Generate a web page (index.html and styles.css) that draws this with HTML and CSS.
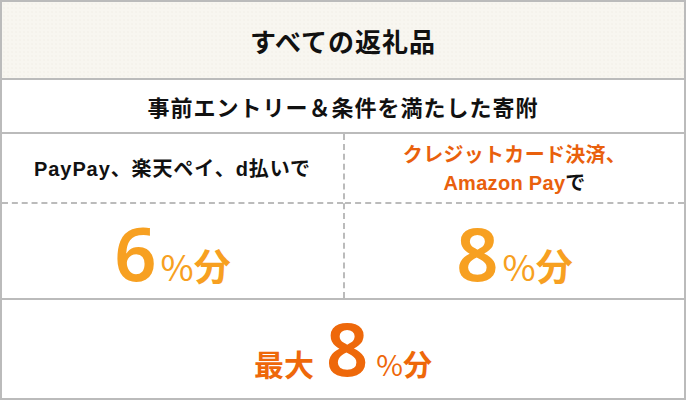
FILE: index.html
```html
<!DOCTYPE html>
<html lang="ja">
<head>
<meta charset="utf-8">
<link rel="stylesheet" href="styles.css">
</head>
<body>
<div class="box">
  <div class="head">すべての返礼品</div>
  <div class="sub">事前エントリー＆条件を満たした寄附</div>
  <div class="cols">
    <div class="col">
      <div class="cap"><p class="cap-t cap-wide">PayPay、楽天ペイ、d払いで</p></div>
      <div class="rate"><span class="num">6</span><span class="pct">%</span><span class="bun">分</span></div>
    </div>
    <div class="col col-r">
      <div class="cap"><p class="cap-t cap-or">クレジットカード決済、<br>Amazon Pay<span class="blk">で</span></p></div>
      <div class="rate"><span class="num">8</span><span class="pct">%</span><span class="bun">分</span></div>
    </div>
  </div>
  <div class="max"><span class="mx">最大</span><span class="num">8</span><span class="pct">%</span><span class="bun">分</span></div>
</div>
</body>
</html>
```
FILE: styles.css
```css
* { box-sizing: border-box; }
html, body { margin: 0; padding: 0; background: #fff; }
body { font-family: "Noto Sans CJK JP", "Noto Sans", sans-serif; color: #111; }
.box {
  width: 686px; height: 400px;
  border: 2px solid #bbb;
  display: flex; flex-direction: column;
}
.head {
  height: 78px;
  border-bottom: 2px solid #bbb;
  background-color: #f8f6f0;
  background-image: radial-gradient(circle, #f1eee6 0.6px, transparent 0.8px);
  background-size: 4px 4px;
  display: flex; align-items: center; justify-content: center;
  font-size: 26px; font-weight: 700; letter-spacing: 1px;
  padding-top: 1px;
}
.sub {
  height: 54px;
  border-bottom: 2px solid #bbb;
  display: flex; align-items: center; justify-content: center;
  font-size: 22px; font-weight: 700; letter-spacing: 1px;
}
.cols { height: 166px; display: flex; border-bottom: 2px solid #bbb; }
.col { flex: 0 0 341px; display: flex; flex-direction: column; }
.col-r { flex: 1; border-left: 2px dashed #bbb; }
.cap {
  height: 70px;
  border-bottom: 2px dashed #bbb;
  display: flex; align-items: center; justify-content: center;
  padding-top: 2px;
}
.cap-t {
  margin: 0;
  text-align: center;
  font-family: "Liberation Sans", "Noto Sans CJK JP", sans-serif;
  font-size: 20px; font-weight: 700; line-height: 28px;
  letter-spacing: 0.3px;
}
.cap-wide { letter-spacing: 0.9px; }
.cap-or { color: #e9600c; }
.blk { color: #111; }
.rate {
  flex: 1;
  display: flex; align-items: baseline; justify-content: center;
  color: #f7a021; font-weight: 700;
  padding-top: 4px;
}
.num { font-family: "Noto Sans", sans-serif; font-size: 74px; line-height: 90px; font-weight: 600; }
.pct { font-family: "Noto Sans CJK JP", sans-serif; font-size: 36px; font-weight: 400; margin-left: 4px; }
.bun { font-size: 37px; font-weight: 700; }
.max {
  flex: 1;
  display: flex; align-items: baseline; justify-content: center;
  color: #ee680a; font-weight: 700;
}
.max .mx { font-size: 30px; margin-right: 14px; }
.max .num { line-height: 96px; margin-left: -2px; }
.max .pct { font-size: 29px; margin-left: 8px; }
.max .bun { font-size: 29px; }
```
